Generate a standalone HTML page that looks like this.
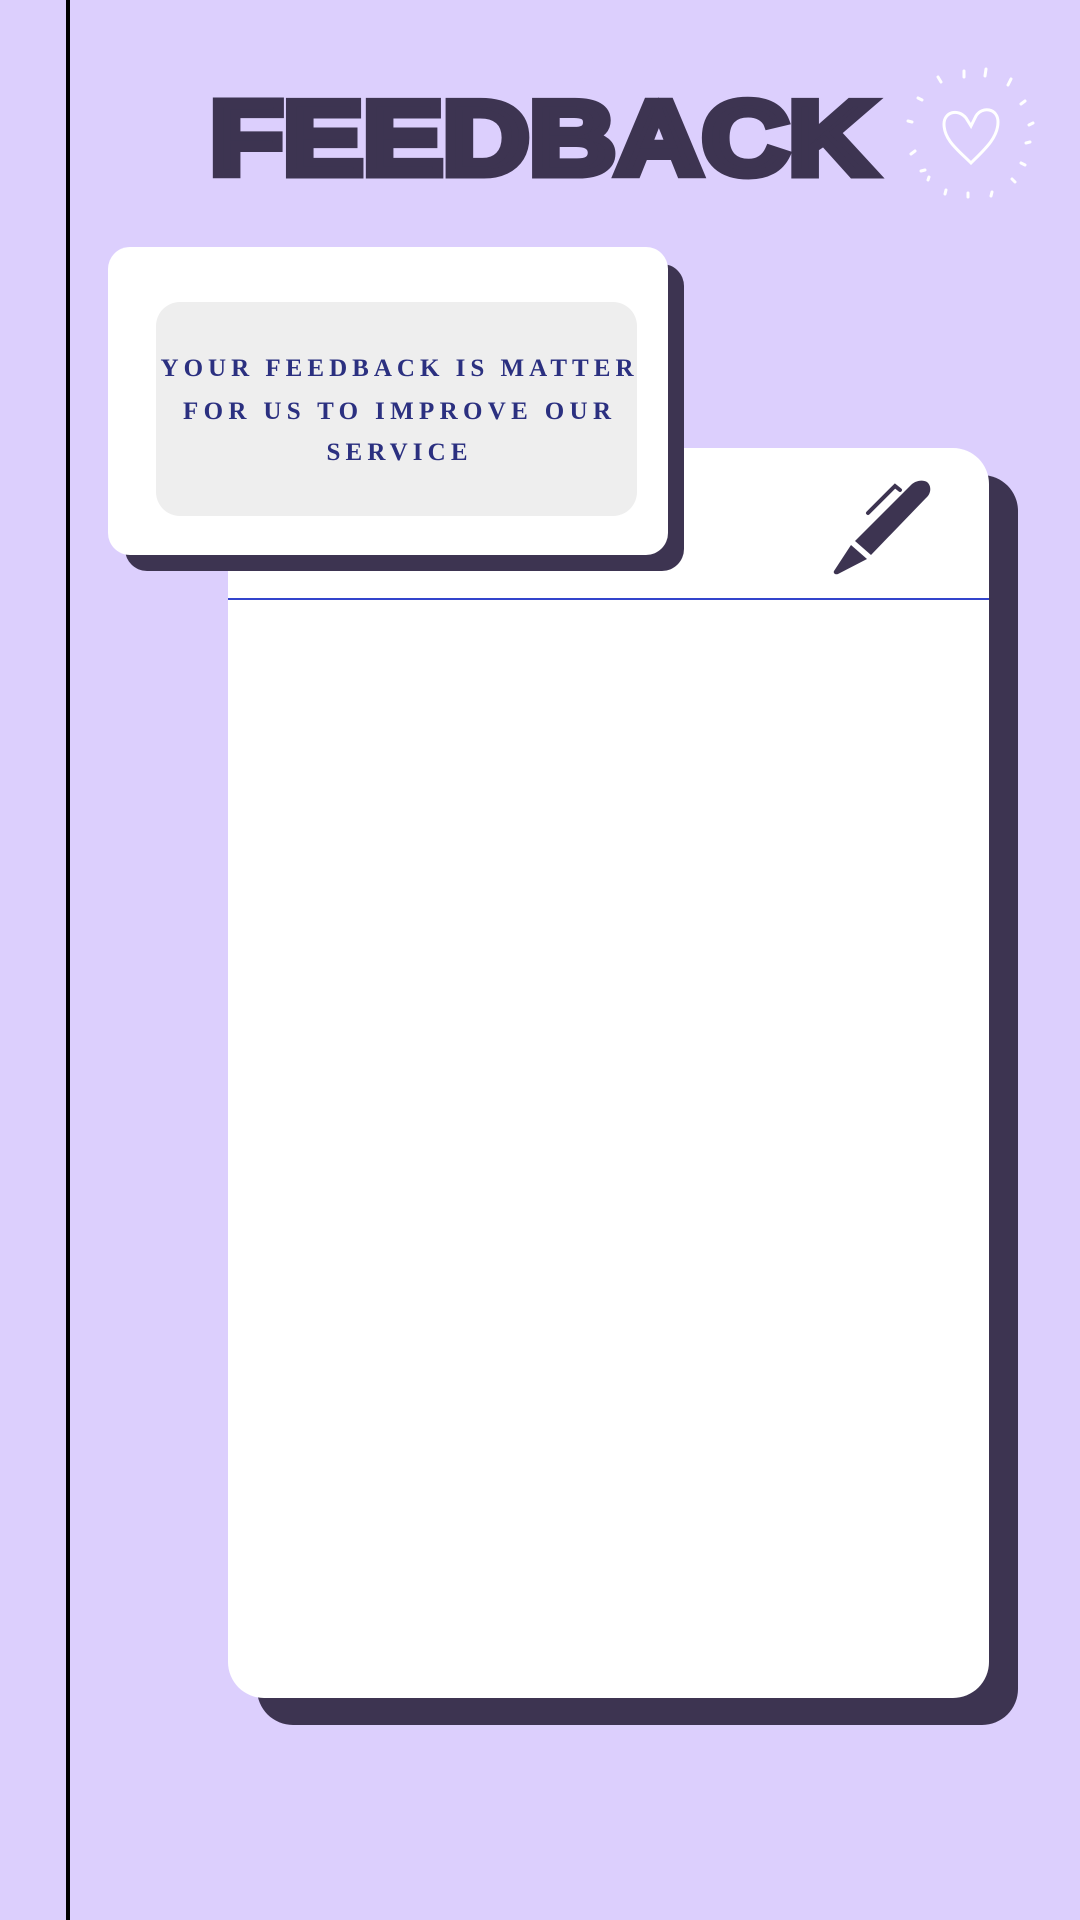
<!DOCTYPE html>
<html><head><meta charset="utf-8"><style>
html,body{margin:0;padding:0}
body{width:1080px;height:1920px;background:#dccffd;position:relative;overflow:hidden}
</style></head><body>
<svg width="1080" height="1920" viewBox="0 0 1080 1920" style="position:absolute;left:0;top:0">
<rect x="0" y="0" width="1080" height="1920" fill="#dccffd"/>
<rect x="66" y="0" width="4" height="1920" fill="#000"/>
<text x="210" y="174" textLength="665" lengthAdjust="spacingAndGlyphs" font-family="Liberation Sans, sans-serif" font-weight="900" font-size="104" fill="#3d3451" stroke="#3d3451" stroke-width="9" stroke-linejoin="miter">FEEDBACK</text>
<!-- heart sparkle -->
<g fill="none" stroke="#fff" stroke-width="3" stroke-linecap="round">
<path d="M971 163 C958 150 944 140 944 124 C944 112 958 108 966 118 L971 126 L976 116 C982 106 998 108 998 122 C998 138 984 150 971 163 Z"/>
<path d="M964 71 L964 77 M986 69 L985 76 M938 77 L941 82 M1011 79 L1008 85 M918 98 L922 100 M1025 101 L1021 104 M908 121 L912 122 M1033 123 L1029 125 M911 154 L915 151 M1030 142 L1026 143 M921 171 L925 170 M1025 165 L1021 163 M929 177 L928 180 M1015 182 L1012 179 M946 190 L945 194 M968 193 L968 197 M992 192 L991 196"/>
</g>
<!-- big card -->
<rect x="257" y="475" width="761" height="1250" rx="36" fill="#3d3451"/>
<rect x="228" y="448" width="761" height="1250" rx="36" fill="#fff"/>
<rect x="228" y="598" width="761" height="2" fill="#3344cc"/>
<!-- pen -->
<g fill="#3d3451">
<path d="M855 541 L910 486 C914 481 922 479 927 482 C932 486 931 494 926 498 L871 555 Z"/>
<path d="M851 545 L867 559 L838 574 C835 575 833 573 834 571 Z"/>
<path d="M868 513 L895 486 L900 490" fill="none" stroke="#3d3451" stroke-width="4" stroke-linecap="round"/>
</g>
<!-- small card -->
<rect x="125" y="264" width="559" height="307" rx="22" fill="#3d3451"/>
<rect x="108" y="247" width="560" height="308" rx="22" fill="#fff"/>
<rect x="156" y="302" width="481" height="214" rx="24" fill="#eeeeee"/>
<g font-family="Liberation Serif, serif" font-weight="bold" font-size="25" fill="#2b3080" text-anchor="middle">
<text x="397" y="376" textLength="473" lengthAdjust="spacing">YOUR FEEDBACK IS MATTER</text>
<text x="397" y="419" textLength="428" lengthAdjust="spacing">FOR US TO IMPROVE OUR</text>
<text x="397" y="460" textLength="141" lengthAdjust="spacing">SERVICE</text>
</g>
</svg>
</body></html>
